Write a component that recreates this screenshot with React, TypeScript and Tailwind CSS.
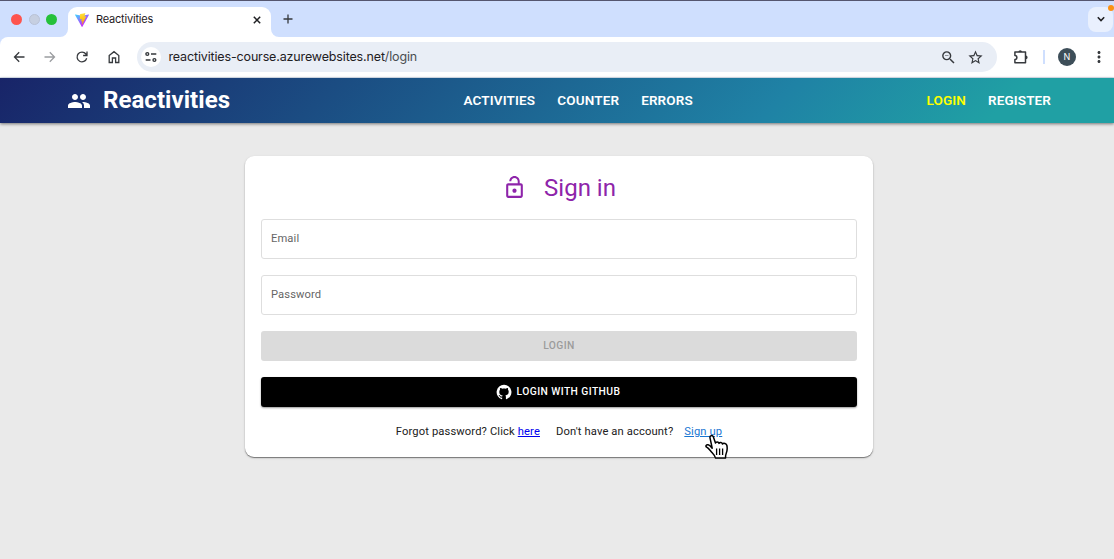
import React from 'react';
import { MdStarOutline, MdZoomOut, MdMoreVert, MdGroup, MdLockOpen } from 'react-icons/md';

function ViteLogo() {
  return (
    <svg viewBox="0 0 256 257" className="block h-[14px] w-[14px]">
      <defs>
        <linearGradient id="vite-a" x1="-.828%" x2="57.636%" y1="7.652%" y2="78.411%">
          <stop offset="0%" stopColor="#41D1FF" />
          <stop offset="100%" stopColor="#BD34FE" />
        </linearGradient>
        <linearGradient id="vite-b" x1="43.376%" x2="50.316%" y1="2.242%" y2="89.03%">
          <stop offset="0%" stopColor="#FFEA83" />
          <stop offset="8.333%" stopColor="#FFDD35" />
          <stop offset="100%" stopColor="#FFA800" />
        </linearGradient>
      </defs>
      <path
        fill="url(#vite-a)"
        d="M255.153 37.938L134.897 252.976c-2.483 4.44-8.862 4.466-11.382.048L.875 37.958c-2.746-4.814 1.371-10.646 6.827-9.67l120.385 21.517a6.537 6.537 0 0 0 2.322-.004l117.867-21.483c5.438-.991 9.574 4.796 6.877 9.62Z"
      />
      <path
        fill="url(#vite-b)"
        d="M185.432.063L96.44 17.501a3.268 3.268 0 0 0-2.634 3.014l-5.474 92.456a3.268 3.268 0 0 0 3.997 3.378l24.777-5.718c2.318-.535 4.413 1.507 3.936 3.838l-7.361 36.047c-.495 2.426 1.782 4.5 4.151 3.78l15.304-4.649c2.372-.72 4.652 1.36 4.15 3.788l-11.698 56.621c-.732 3.542 3.979 5.473 5.943 2.437l1.313-2.028l72.516-144.72c1.215-2.423-.88-5.186-3.54-4.672l-25.505 4.922c-2.396.462-4.435-1.77-3.759-4.114l16.646-57.705c.677-2.35-1.37-4.583-3.769-4.113Z"
      />
    </svg>
  );
}

function ToolbarIcon({ className, children }: { className: string; children: React.ReactNode }) {
  return (
    <svg
      viewBox="0 0 16 16"
      className={`h-4 w-4 shrink-0 ${className}`}
      fill="none"
      stroke="currentColor"
      strokeWidth="1.3"
    >
      {children}
    </svg>
  );
}

function SiteSettingsIcon() {
  return (
    <svg viewBox="0 0 12 12" className="h-3 w-3" fill="none" stroke="#36393d" strokeWidth="1.4">
      <circle cx="2.3" cy="3" r="1.4" />
      <path d="M6 3h5.3M.7 9h4.8" />
      <circle cx="9.4" cy="9" r="1.4" />
    </svg>
  );
}

function GithubIcon() {
  return (
    <svg viewBox="0 0 24 24" className="h-4 w-4" fill="#fff">
      <path d="M12 1.27a11 11 0 00-3.48 21.46c.55.09.73-.28.73-.55v-1.84c-3.03.64-3.67-1.46-3.67-1.46-.55-1.29-1.28-1.65-1.28-1.65-.92-.65.1-.65.1-.65 1.1 0 1.73 1.1 1.73 1.1.92 1.65 2.57 1.2 3.21.92a2 2 0 01.64-1.47c-2.47-.27-5.04-1.19-5.04-5.5 0-1.1.46-2.1 1.2-2.84a3.76 3.76 0 010-2.93s.91-.28 3.11 1.1c1.8-.49 3.7-.49 5.5 0 2.1-1.38 3.02-1.1 3.02-1.1a3.76 3.76 0 01.1 2.93c.83.74 1.2 1.74 1.2 2.94 0 4.21-2.57 5.13-5.04 5.4.45.37.82.92.82 2.02v3.03c0 .27.1.64.73.55A11 11 0 0012 1.27" />
    </svg>
  );
}

function HandCursor() {
  return (
    <svg viewBox="0 0 24 26" className="absolute left-[705px] top-[434px] h-[26px] w-6">
      <path
        d="M7.2 14.2 5 3.9C4.5 1.3 7.6.8 8.4 3.1l2.1 6c.5-1.6 3-1.4 3.5.3.8-1.5 3.1-1 3.5.6 1.2-1.3 3.9-.4 4.4 1.500.6 3.300.4 5.600-.8 8.200-.6 1.300-.6 2.500-.6 4.300h-10c-.4-2.500-2.800-4.500-4.500-6.500-1.500-1.800-2.500-3.300-4.300-4.300-1.500-1-.4-3 1.600-2.400 1.600.4 2.700 1.800 3.900 3.400Z"
        fill="#fff"
        stroke="#000"
        strokeWidth="1.5"
        strokeLinejoin="round"
      />
      <path d="M11.600 14.500v6.500M14.600 14.500v6.500M17.600 14.500v6.500" stroke="#000" strokeWidth="1.3" />
    </svg>
  );
}

function TabStrip() {
  return (
    <div className="flex h-[37px] items-end border-t border-[#55566f] bg-[#cfdffe]">
      <div className="flex h-9 items-center gap-[6.5px] pl-[11px] pr-[3px]">
        <span className="h-[11px] w-[11px] rounded-full bg-[#fe544d]" />
        <span className="h-[11px] w-[11px] rounded-full border border-[#b9c2d6] bg-[#c6cfe1]" />
        <span className="h-[11px] w-[11px] rounded-full bg-[#25c13a]" />
      </div>
      <svg viewBox="0 0 8 8" className="h-2 w-2" fill="#fff">
        <path d="M8 0v8H0a8 8 0 0 0 8-8Z" />
      </svg>
      <div className="flex h-[30px] w-[203px] items-center rounded-t-[9px] bg-white pb-[5px] pl-[7px] pr-[9px]">
        <ViteLogo />
        <span className="ml-[7px] text-[11px] tracking-[-0.2px] text-[#1f2023]">Reactivities</span>
        <svg viewBox="0 0 10 10" className="ml-auto h-[10px] w-[10px]" stroke="#1f2023" strokeWidth="1.5">
          <path d="M1.8 1.8l6.4 6.4M8.2 1.8 1.8 8.2" />
        </svg>
      </div>
      <svg viewBox="0 0 8 8" className="h-2 w-2" fill="#fff">
        <path d="M0 0v8h8a8 8 0 0 1-8-8Z" />
      </svg>
      <div className="flex h-9 flex-1 items-center justify-between">
        <svg viewBox="0 0 10 10" className="ml-[4px] h-[10px] w-[10px]" stroke="#36393d" strokeWidth="1.3">
          <path d="M5 .5v9M.5 5h9" />
        </svg>
        <div className="relative mr-px flex h-[25px] w-[25px] items-center justify-center rounded-[8px] bg-[#e9f0fe]">
          <svg viewBox="0 0 8 8" className="h-2 w-2" fill="none" stroke="#1f2023" strokeWidth="1.6">
            <path d="M.8 2.3 4 5.5l3.2-3.2" />
          </svg>
          <span className="absolute right-[-1px] top-[-2px] h-[6px] w-[6px] rounded-full bg-[#fb9113]" />
        </div>
      </div>
    </div>
  );
}

function Toolbar() {
  return (
    <div className="bg-[#cfdffe]">
      <div className="flex h-[41px] items-center rounded-tl-[8px] border-b border-[#dfe7f3] bg-white pl-[11px] text-[#36393d]">
        <ToolbarIcon className="">
          <path d="M13.5 8H3.8M8.2 3.3 3.5 8l4.7 4.7" />
        </ToolbarIcon>
        <ToolbarIcon className="ml-[15px] text-[#9b9da0]">
          <path d="M2.5 8h9.7M7.8 3.3 12.5 8l-4.7 4.7" />
        </ToolbarIcon>
        <ToolbarIcon className="ml-4">
          <path d="M12.7 9.3A4.900 4.900 0 1 1 11.900 5l1 1.300M13 2.500v4H9.100" />
        </ToolbarIcon>
        <ToolbarIcon className="ml-[16px]">
          <path d="M3.2 6.5 8 2.7l4.8 3.8v7H9.6V9H6.4v4.5H3.2Z" />
        </ToolbarIcon>
        <div className="ml-[15px] flex h-[30px] w-[860px] items-center rounded-full bg-[#e9eef6] pl-[4px] pr-[13px]">
          <span className="flex h-5 w-5 items-center justify-center rounded-full bg-white">
            <SiteSettingsIcon />
          </span>
          <span className="ml-[7.5px] text-[12.5px] tracking-[-0.15px] text-[#1f2023]">
            reactivities-course.azurewebsites.net<span className="text-[#4a4d51]">/login</span>
          </span>
          <MdZoomOut className="ml-auto h-[17px] w-[17px]" />
          <MdStarOutline className="ml-[10px] h-[17px] w-[17px]" />
        </div>
        <ToolbarIcon className="ml-[15px]">
          <path
            d="M2.900 3.100h10.600v10.600H2.900v-3.300a2 2 0 0 0 0-4Z"
            strokeWidth="1.500"
            strokeLinejoin="round"
          />
          <path
            d="M6.400 3a1.800 1.800 0 0 1 3.600 0ZM13.800 6.600a1.800 1.800 0 0 1 0 3.600Z"
            fill="currentColor"
            stroke="none"
          />
        </ToolbarIcon>
        <span className="ml-[15px] h-[14px] w-[2px] bg-[#cfdffe]" />
        <span className="ml-[13px] flex h-[18px] w-[18px] items-center justify-center rounded-full bg-[#3d4e59] text-[9px] text-white">
          N
        </span>
        <MdMoreVert className="ml-[14px] h-[18px] w-[18px]" />
      </div>
    </div>
  );
}

function NavBar() {
  return (
    <nav className="relative flex h-[45px] items-center bg-[linear-gradient(135deg,#182468_0%,#1f82a5_69%,#20a0a4_89%)] pl-[67px] pr-[63px] text-white shadow-[0_1px_3px_rgba(0,0,0,0.5)]">
      <div className="flex w-[396.5px] items-center">
        <MdGroup className="h-6 w-6" />
        <span className="ml-[12px] text-[24px] font-bold leading-[45px] tracking-[0.05px]">Reactivities</span>
      </div>
      <div className="flex gap-[22px] pb-px text-[13.5px] font-semibold tracking-[0.15px]">
        <span>ACTIVITIES</span>
        <span>COUNTER</span>
        <span>ERRORS</span>
      </div>
      <div className="ml-auto flex gap-[22px] pb-px text-[13.5px] font-semibold tracking-[0.12px]">
        <span className="text-[#ffff00]">LOGIN</span>
        <span>REGISTER</span>
      </div>
    </nav>
  );
}

function Field({ label }: { label: string }) {
  return (
    <div className="flex h-10 items-center rounded-[3px] border border-[#dedede] px-[9px] text-[11.2px] tracking-[0.1px] text-[#666]">
      {label}
    </div>
  );
}

function LoginCard() {
  return (
    <section className="ml-[245px] mt-[33px] flex h-[301px] w-[628px] flex-col rounded-[9px] bg-white px-4 shadow-[0_1px_1px_rgba(0,0,0,0.45),0_1px_3px_rgba(0,0,0,0.12)]">
      <div className="flex h-[63px] items-center justify-center text-[#8e24aa]">
        <MdLockOpen className="h-[25px] w-[25px]" />
        <h1 className="ml-[17px] text-[24px]">Sign in</h1>
      </div>
      <div className="flex flex-col gap-4">
        <Field label="Email" />
        <Field label="Password" />
        <button className="h-[30px] rounded-[3px] bg-[#dbdbdb] text-[10.3px] font-medium tracking-[0.4px] text-[#9b9b9b]">
          LOGIN
        </button>
        <button className="flex h-[30px] items-center justify-center gap-[5px] rounded-[3px] bg-black pr-[2px] text-[10.3px] font-medium tracking-[0.42px] text-white shadow-[0_1px_2px_rgba(0,0,0,0.4)]">
          <GithubIcon />
          LOGIN WITH GITHUB
        </button>
      </div>
      <div className="mt-[17px] flex justify-center text-[11.2px] leading-4 tracking-[0.13px] text-[#212121]">
        <span>
          Forgot password? Click <a className="text-[#0000ee] underline">here</a>
        </span>
        <span className="ml-4">Don't have an account?</span>
        <a className="ml-[11px] text-[#1976d2] underline">Sign up</a>
      </div>
    </section>
  );
}

export default function App() {
  return (
    <div className="relative h-[559px] w-[1114px] overflow-hidden bg-[#eaeaea] font-['Roboto',sans-serif]">
      <header className="font-['Inter',sans-serif]">
        <TabStrip />
        <Toolbar />
      </header>
      <NavBar />
      <LoginCard />
      <HandCursor />
    </div>
  );
}
